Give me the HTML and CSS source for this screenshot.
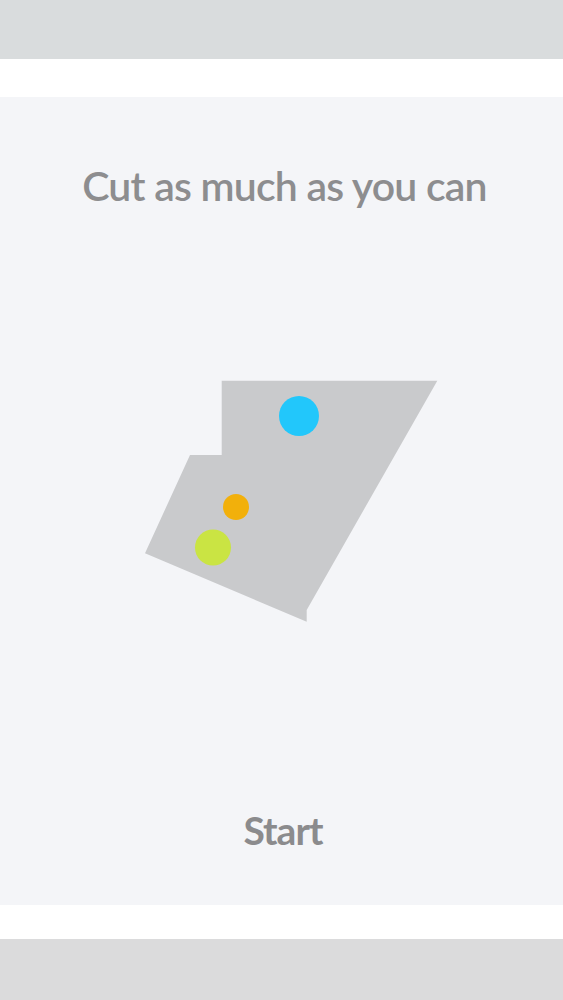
FILE: index.html
```html
<!DOCTYPE html>
<html>
<head>
<meta charset="utf-8">
<link rel="stylesheet" href="styles.css">
</head>
<body>
<div class="topbar"></div>
<div class="gap-top"></div>
<main class="panel">
  <h1 class="title">Cut as much as you can</h1>
  <svg class="board" width="563" height="280" viewBox="0 0 563 280">
    <polygon points="221.7,20.7 437.3,20.7 306.7,250 306.7,261.7 145,193.3 190,95 221.7,95" fill="#c9cacc"/>
    <circle cx="299" cy="56" r="20" fill="#22c7fb"/>
    <circle cx="236" cy="147" r="13" fill="#f2b00b"/>
    <circle cx="213" cy="187.5" r="18" fill="#cae443"/>
  </svg>
  <div class="start">Start</div>
</main>
<div class="gap-bottom"></div>
<div class="bottombar"></div>
</body>
</html>
```
FILE: styles.css
```css
html, body {
  margin: 0;
  padding: 0;
  background: #ffffff;
  font-family: Lato, "Noto Sans", sans-serif;
}
.topbar {
  height: 59px;
  background: #d9dcdd;
}
.gap-top {
  height: 38px;
  background: #ffffff;
}
.panel {
  height: 808px;
  background: #f4f5f8;
  display: flex;
  flex-direction: column;
  align-items: center;
  box-sizing: border-box;
}
.title {
  margin: 64px 0 0 0;
  font-size: 41px;
  line-height: 50px;
  font-weight: 600;
  color: #8d8d8f;
  letter-spacing: -0.8px;
  padding-left: 6px;
}
.board {
  display: block;
  margin-top: 149px;
}
.start {
  margin-top: 165px;
  font-size: 39px;
  line-height: 50px;
  font-weight: 700;
  color: #8b8b8d;
  letter-spacing: -1px;
  padding-left: 3px;
}
.gap-bottom {
  height: 34px;
  background: #ffffff;
}
.bottombar {
  height: 61px;
  background: #dbdbdc;
}
```
